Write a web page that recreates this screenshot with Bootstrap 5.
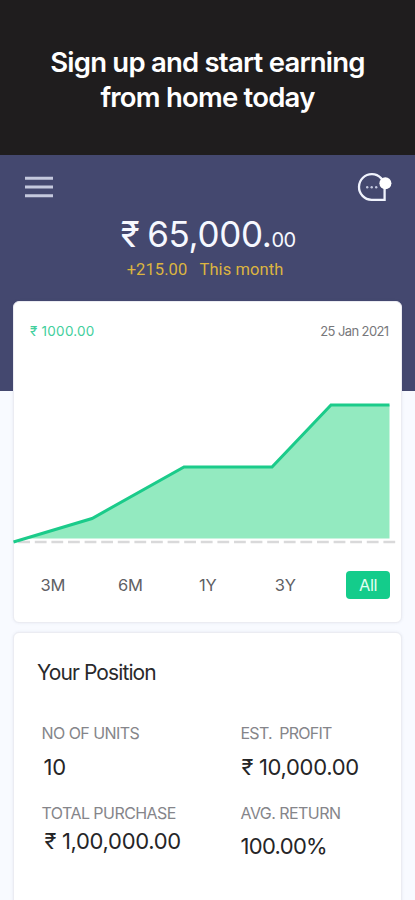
<!DOCTYPE html>
<html lang="en">
<head>
<meta charset="utf-8">
<meta name="viewport" content="width=device-width, initial-scale=1">
<title>Portfolio</title>
<link href="https://cdn.jsdelivr.net/npm/bootstrap@5.3.0/dist/css/bootstrap.min.css" rel="stylesheet">
<style>
body{font-family:Inter,"Liberation Sans",sans-serif;background:#f8faff;height:900px;overflow:hidden}
.promo{height:155px;padding-top:45px;background:#1f1d1e;color:#fff}
.promo h1{font-size:27.5px;line-height:35px;font-weight:600;letter-spacing:-.78px}
.hero{height:235.5px;padding-top:17px;background:#44486f}
.topnav{height:30px;padding:0 23px 0 25px;margin-bottom:12px}
.balance{font-size:35px;line-height:40px;letter-spacing:-.35px;color:#f6f8ff;padding-left:1px}
.balance .rupee{margin-right:8px}
.balance .cents{font-size:20px;letter-spacing:-.7px}
.delta{font:400 16.5px/24px Roboto,sans-serif;letter-spacing:.08px;color:#dcb540;margin-top:-2px;padding-right:5px;white-space:pre}
.panel{margin:0 13px;border:1px solid #ebecf2;border-radius:6px;box-shadow:0 0 3px rgba(70,75,120,.1)}
.chart-panel{margin-top:-89.5px;height:322px}
.chart-head{padding:19px 12.5px 0 16px;line-height:20px;height:93px}
.worth{font-size:13.5px;letter-spacing:.25px;color:#42cf9d}
.asof{font-size:13px;letter-spacing:-.6px;color:#77777b}
.plot{display:block;width:389px;height:155px;margin-left:-1px}
.ranges{margin:21px 11px 0 0;font-size:16.5px;line-height:28px;color:#606064}
.ranges .range{width:77.5px;letter-spacing:-.2px}
.ranges .range-on{width:44px;border-radius:4px;background:#14cc8b;color:#e2fff2;letter-spacing:-.4px}
.position-panel{margin-top:9px;height:300px;padding:27px 0 0 23px}
.position-panel h2{font-size:21px;line-height:26px;letter-spacing:-.9px;color:#29292b;margin:0 0 36px}
.facts{padding-left:4.5px}
.facts .left-col{width:199px}
.facts dt{font-size:16px;line-height:22px;font-weight:400;letter-spacing:-.55px;color:#85858a;white-space:pre}
.facts .profit-label{letter-spacing:-.75px}
.facts dd{font-size:22px;line-height:28px;letter-spacing:-.32px;color:#252527;margin:9px 0 21px}
.facts .units{padding-left:2px}
.facts .profit{padding-left:1px}
.facts .purchase{margin-top:3px;padding-left:3px}
.facts .return{letter-spacing:-.68px;margin-top:8px}
</style>
</head>
<body>
<header class="promo text-center"><h1 class="m-0">Sign up and start earning<br>from home today</h1></header>
<section class="hero text-center">
  <nav class="topnav d-flex justify-content-between align-items-center">
    <svg width="28" height="22" viewBox="0 0 28 22" stroke="#c5c9de" stroke-width="3"><path d="M0 2.2h28M0 11h28M0 19.7h28"/></svg>
    <svg width="35" height="30" viewBox="0 0 35 30" fill="none"><path d="M27.6 15.2V27.8H14.5A12.8 12.8 0 1 1 27.6 15.2Z" stroke="#f0f3fd" stroke-width="2.3"/><circle cx="28.4" cy="11.3" r="6" fill="#fff"/><g fill="#c3c8df"><circle cx="10.2" cy="15.3" r="1.2"/><circle cx="14.7" cy="15.3" r="1.2"/><circle cx="19.2" cy="15.3" r="1.2"/></g></svg>
  </nav>
  <div class="balance"><span class="rupee">₹</span>65,000.<span class="cents">00</span></div>
  <div class="delta">+215.00   This month</div>
</section>
<main>
  <section class="panel chart-panel bg-white position-relative">
    <div class="chart-head d-flex justify-content-between"><span class="worth">₹ 1000.00</span><span class="asof">25 Jan 2021</span></div>
    <svg class="plot" viewBox="13 395 389 155" fill="none">
      <path d="M14 541.5 92 518.5 184 467H272L331 405H389.5V538.5H24Z" fill="#93eac0"/>
      <path d="M18.2 542H395.5" stroke="#d9d9da" stroke-width="2.6" stroke-dasharray="11.8 4.8"/>
      <path d="M13.5 542 92 518.5 184 467H272L331 405H389.5" stroke="#1bcb8a" stroke-width="3"/>
    </svg>
    <div class="ranges d-flex text-center"><span class="range">3M</span><span class="range">6M</span><span class="range">1Y</span><span class="range">3Y</span><span class="range-on ms-auto">All</span></div>
  </section>
  <section class="panel position-panel bg-white">
    <h2 class="fw-normal">Your Position</h2>
    <div class="facts d-flex">
      <dl class="left-col m-0">
        <dt>NO OF UNITS</dt><dd class="units">10</dd>
        <dt>TOTAL PURCHASE</dt><dd class="purchase">₹ 1,00,000.00</dd>
      </dl>
      <dl class="m-0">
        <dt class="profit-label">EST.  PROFIT</dt><dd class="profit">₹ 10,000.00</dd>
        <dt>AVG. RETURN</dt><dd class="return">100.00%</dd>
      </dl>
    </div>
  </section>
</main>
<script src="https://cdn.jsdelivr.net/npm/bootstrap@5.3.0/dist/js/bootstrap.bundle.min.js"></script>
</body>
</html>
